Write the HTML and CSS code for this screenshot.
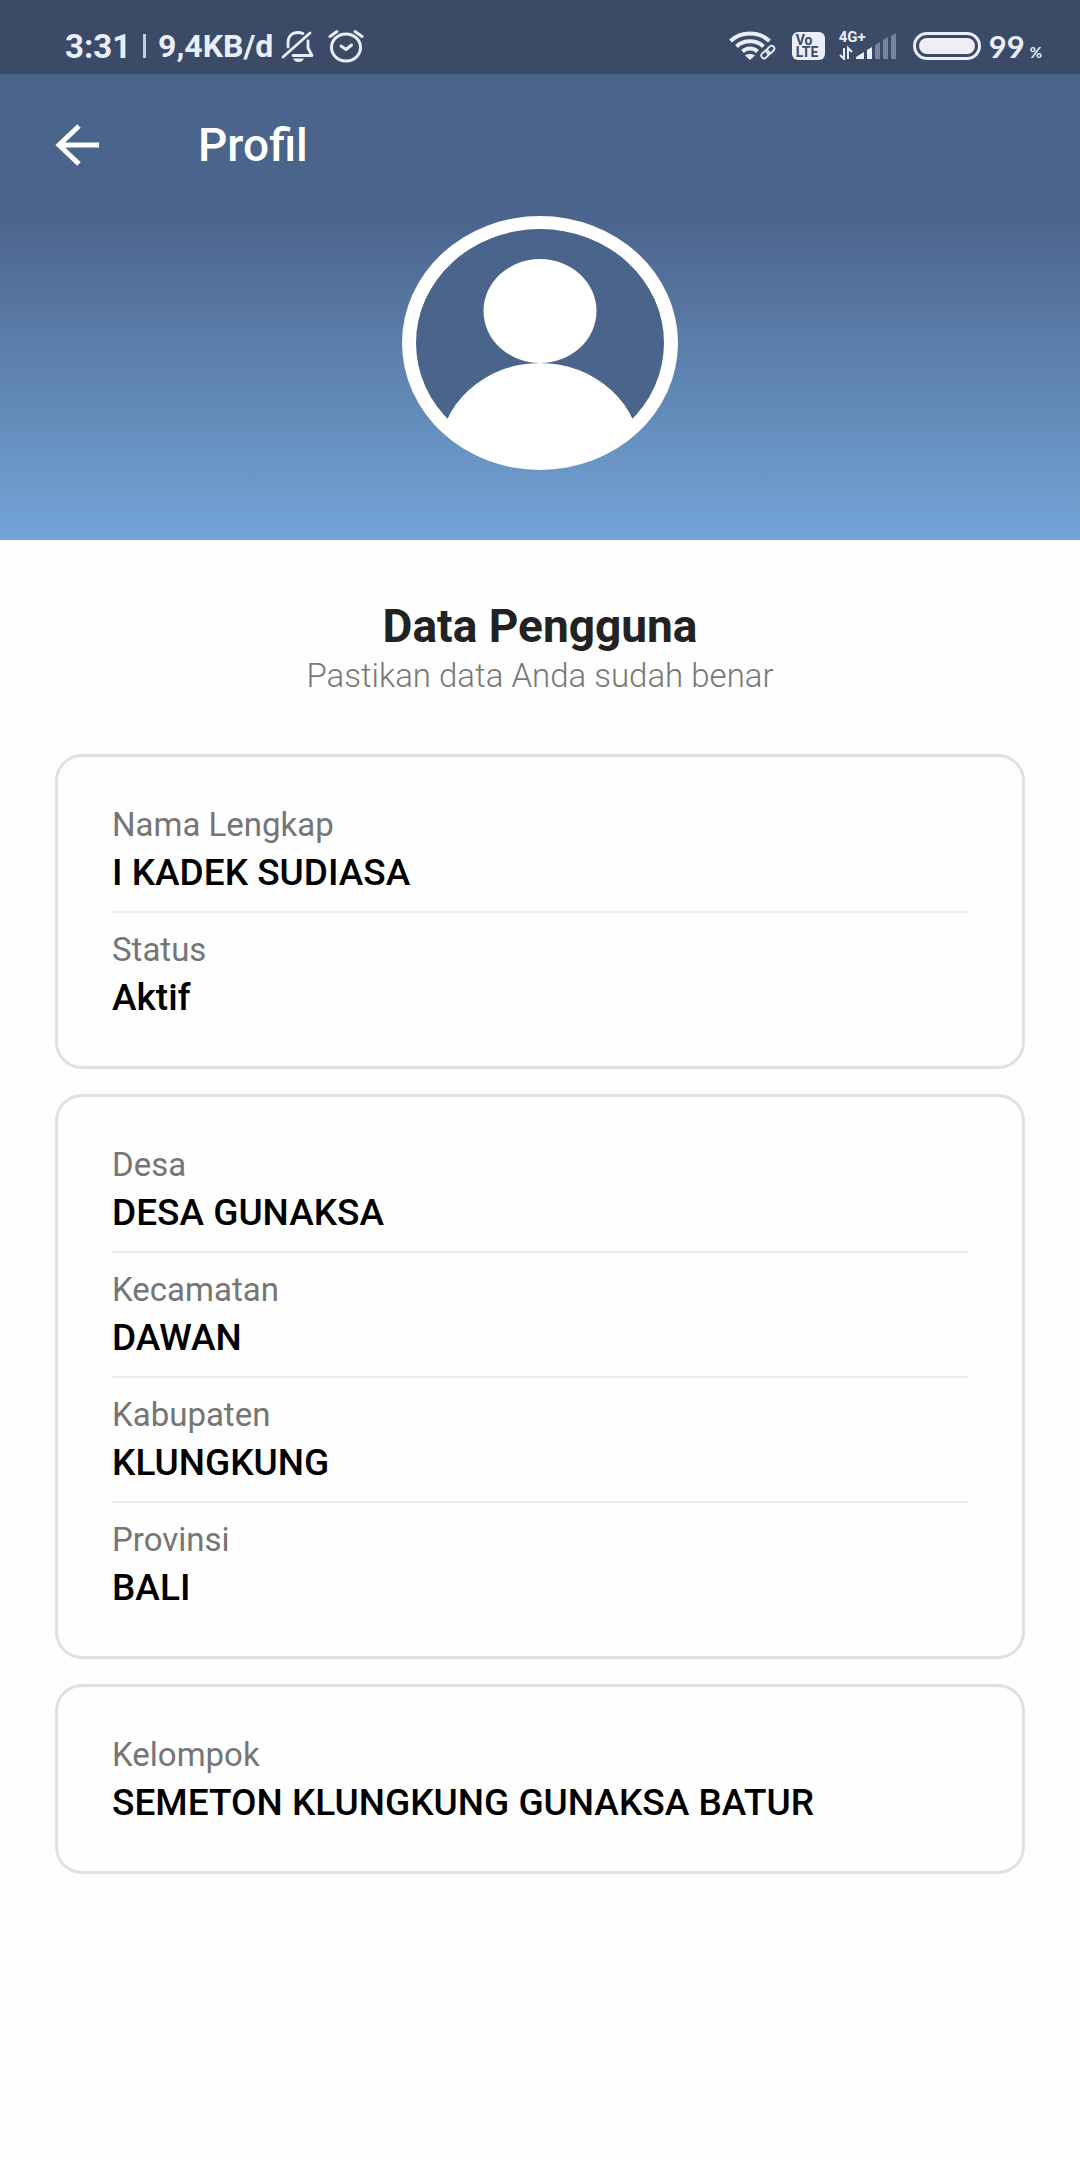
FILE: index.html
```
<!DOCTYPE html>
<html lang="id">
<head>
    <meta charset="UTF-8">
    <meta name="viewport" content="width=device-width, initial-scale=1.0">
    <title>Profil</title>
    <link rel="stylesheet" href="styles.css">
</head>
<body>
    <div class="status-bar">
        <div class="status-left">
            <span class="clock">3:31</span>
            <span class="divider"></span>
            <span class="speed">9,4KB/d</span>
            <svg class="icon-bell" width="34" height="32" viewBox="0 0 34 32" fill="none" stroke="currentColor" stroke-width="2.8" stroke-linecap="round" stroke-linejoin="round">
                <path d="M2 27 L29 3"/>
                <path d="M7 17 V13 C7 6 11 2.500 17 2.500 C19 2.500 20.500 2.800 22 3.600"/>
                <path d="M27 11 V18 L31 25.500 H12"/>
                <path d="M12 28.500 H23 C22 31 20 32 17.500 32 C15 32 13 31 12 28.500 Z" fill="currentColor" stroke="none"/>
            </svg>
            <svg class="icon-alarm" width="36" height="34" viewBox="0 0 36 34" fill="none" stroke="currentColor" stroke-width="3" stroke-linecap="round" stroke-linejoin="round">
                <ellipse cx="18" cy="18.500" rx="14.500" ry="13.500"/>
                <path d="M2 7.500 L9 2.500 M34 7.500 L27 2.500"/>
                <path d="M13 17 L18 20.500 L23.500 16"/>
            </svg>
        </div>
        <div class="status-right">
            <svg class="icon-wifi" width="48" height="30" viewBox="0 0 48 30" fill="none" stroke="currentColor">
                <path d="M1.500 10 C12 0 30 0 40.500 10" stroke-width="4"/>
                <path d="M7.500 15.500 C14.500 8.500 27.500 8.500 34.500 15.500" stroke-width="4"/>
                <path d="M13.500 20.500 C17.500 16.500 24.500 16.500 28.500 20.500" stroke-width="4"/>
                <path d="M16 24.500 C18.500 22.500 23.500 22.500 26 24.500 L21 29 Z" fill="currentColor" stroke="none"/>
                <g stroke-width="1.800">
                    <rect x="32" y="20.500" width="9" height="5.500" rx="2.700" transform="rotate(-45 36.500 23.500)"/>
                    <rect x="37" y="16" width="9" height="5.500" rx="2.700" transform="rotate(-45 41.500 19)"/>
                </g>
            </svg>
            <span class="volte"><span>Vo</span><span>LTE</span></span>
            <div class="signal">
                <span class="network">4G+</span>
                <svg width="58" height="28" viewBox="0 0 58 28">
                    <g fill="none" stroke="currentColor" stroke-width="2">
                        <path d="M5 16 V27 L1 23 M9 27 V16 L13 20"/>
                    </g>
                    <g fill="currentColor">
                        <path d="M17 27 V25 L25 20 V27 Z"/>
                        <path d="M28 27 V18 L33 15 V27 Z"/>
                        <path opacity=".35" d="M36 27 V13 L41 10 V27 Z M44 27 V8 L49 5 V27 Z M52 27 V4 L57 1 V27 Z"/>
                    </g>
                </svg>
            </div>
            <span class="battery"><span class="battery-level"></span></span>
            <span class="percent">99<small>%</small></span>
        </div>
    </div>

    <header class="header">
        <div class="app-bar">
            <button class="back-btn" type="button" aria-label="Kembali">
                <svg width="44" height="42" viewBox="0 0 44 42" fill="none" stroke="currentColor" stroke-width="5">
                    <path d="M44 21 H4 M24 2 L4 21 L24 40"/>
                </svg>
            </button>
            <h1>Profil</h1>
        </div>
        <svg class="avatar" width="276" height="254" viewBox="0 0 276 254">
            <clipPath id="avatar-clip">
                <ellipse cx="138" cy="127" rx="137" ry="126"/>
            </clipPath>
            <ellipse cx="138" cy="127" rx="138" ry="127" fill="#fff"/>
            <ellipse cx="138" cy="127" rx="124" ry="114" fill="#4b648c"/>
            <ellipse cx="138" cy="95" rx="56.500" ry="52" fill="#fff"/>
            <ellipse cx="138" cy="240" rx="101" ry="93" fill="#fff" clip-path="url(#avatar-clip)"/>
        </svg>
    </header>

    <main class="content">
        <h2>Data Pengguna</h2>
        <p class="subtitle">Pastikan data Anda sudah benar</p>

        <dl class="card">
            <div class="row">
                <dt>Nama Lengkap</dt>
                <dd>I KADEK SUDIASA</dd>
            </div>
            <div class="row">
                <dt>Status</dt>
                <dd>Aktif</dd>
            </div>
        </dl>

        <dl class="card">
            <div class="row">
                <dt>Desa</dt>
                <dd>DESA GUNAKSA</dd>
            </div>
            <div class="row">
                <dt>Kecamatan</dt>
                <dd>DAWAN</dd>
            </div>
            <div class="row">
                <dt>Kabupaten</dt>
                <dd>KLUNGKUNG</dd>
            </div>
            <div class="row">
                <dt>Provinsi</dt>
                <dd>BALI</dd>
            </div>
        </dl>

        <dl class="card">
            <div class="row">
                <dt>Kelompok</dt>
                <dd>SEMETON KLUNGKUNG GUNAKSA BATUR</dd>
            </div>
        </dl>
    </main>
</body>
</html>
```
FILE: styles.css
```
* {
    box-sizing: border-box;
}
body {
    font-family: Roboto, Arial, sans-serif;
    margin: 0;
    background-color: #fefefe;
    color: #000;
}
h1, h2, p, dl, dd {
    margin: 0;
}

/* status bar */
.status-bar {
    display: flex;
    justify-content: space-between;
    align-items: center;
    height: 74px;
    padding: 18px 38px 0 65px;
    background-color: #3a4a67;
    color: #e9eefa;
}
.status-left, .status-right {
    display: flex;
    align-items: center;
}
.clock {
    font-size: 33px;
    font-weight: 700;
}
.divider {
    width: 3px;
    height: 24px;
    margin: 0 12px;
    background-color: #c5cddd;
}
.speed {
    font-size: 32px;
    font-weight: 700;
}
.icon-bell {
    margin-left: 8px;
}
.icon-alarm {
    margin-left: 13px;
}
.volte {
    display: flex;
    flex-direction: column;
    width: 33px;
    height: 28px;
    margin-left: 15px;
    padding: 2px 4px;
    border-radius: 6px;
    background-color: #e9eefa;
    color: #3a4a67;
    font-size: 14px;
    font-weight: 700;
    line-height: 12px;
}
.signal {
    position: relative;
    display: flex;
    margin-left: 14px;
}
.network {
    position: absolute;
    top: -2px;
    left: 0;
    font-size: 15px;
    font-weight: 700;
    line-height: 14px;
}
.battery {
    display: flex;
    width: 68px;
    height: 28px;
    margin: 0 8px 0 16px;
    padding: 3px;
    border: 3px solid #e9eefa;
    border-radius: 14px;
}
.battery-level {
    flex: 1;
    border-radius: 8px;
    background-color: #eeeff3;
}
.percent {
    font-family: Lato, Roboto, sans-serif;
    font-size: 31px;
    font-weight: 700;
}
.percent small {
    margin-left: 5px;
    font-size: 15px;
}

/* header */
.header {
    display: flex;
    flex-direction: column;
    align-items: center;
    padding-bottom: 70px;
    background: linear-gradient(#4b648c 30%, #73a4d7);
}
.app-bar {
    display: flex;
    align-items: center;
    align-self: stretch;
    gap: 99px;
    height: 142px;
    padding: 0 55px;
}
.back-btn {
    display: flex;
    padding: 0;
    border: none;
    background: none;
    color: white;
    cursor: pointer;
}
.app-bar h1 {
    color: white;
    font-size: 46px;
    font-weight: 500;
}

/* content */
.content {
    padding: 60px 55px;
}
.content h2 {
    color: #222;
    font-size: 46px;
    font-weight: 700;
    line-height: 52px;
    text-align: center;
}
.subtitle {
    margin-bottom: 55px;
    color: #777;
    font-size: 33px;
    font-weight: 300;
    line-height: 47px;
    text-align: center;
}
.card {
    margin-bottom: 25px;
    padding: 44px 54px;
    border: 3px solid #e0e0e0;
    border-radius: 27px;
}
.row + .row {
    margin-top: 14px;
    padding-top: 13px;
    border-top: 2px solid #ededed;
}
.row dt {
    color: #757575;
    font-size: 33px;
    line-height: 48px;
}
.row dd {
    font-size: 37px;
    font-weight: 500;
    line-height: 48px;
}
```
